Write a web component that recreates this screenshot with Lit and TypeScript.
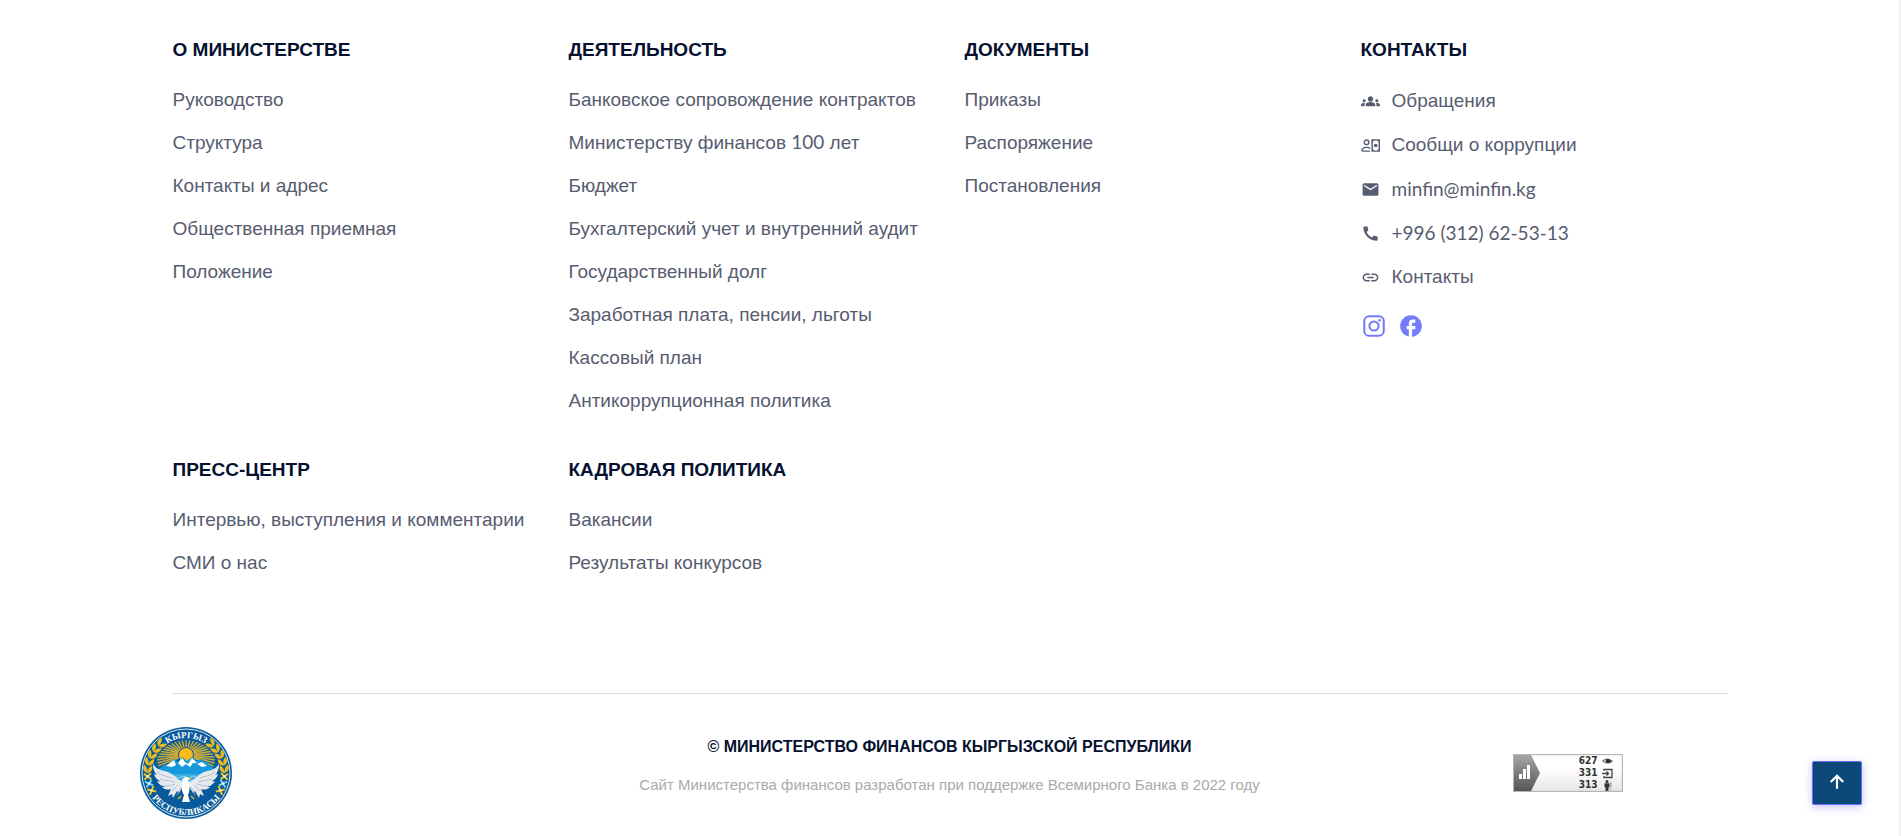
import { LitElement, html, css, svg } from "lit";
import { customElement } from "lit/decorators.js";

interface Section {
  title: string;
  links: string[];
}

const TOP_SECTIONS: Section[] = [
  {
    title: "О МИНИСТЕРСТВЕ",
    links: ["Руководство", "Структура", "Контакты и адрес", "Общественная приемная", "Положение"],
  },
  {
    title: "ДЕЯТЕЛЬНОСТЬ",
    links: [
      "Банковское сопровождение контрактов",
      "Министерству финансов 100 лет",
      "Бюджет",
      "Бухгалтерский учет и внутренний аудит",
      "Государственный долг",
      "Заработная плата, пенсии, льготы",
      "Кассовый план",
      "Антикоррупционная политика",
    ],
  },
  { title: "ДОКУМЕНТЫ", links: ["Приказы", "Распоряжение", "Постановления"] },
];

const BOTTOM_SECTIONS: Section[] = [
  { title: "ПРЕСС-ЦЕНТР", links: ["Интервью, выступления и комментарии", "СМИ о нас"] },
  { title: "КАДРОВАЯ ПОЛИТИКА", links: ["Вакансии", "Результаты конкурсов"] },
];

const groupsIcon = svg`<path d="M12 12.75c1.63 0 3.07.39 4.24.9 1.08.48 1.76 1.56 1.76 2.73V18H6v-1.61c0-1.18.68-2.26 1.76-2.73 1.17-.52 2.61-.91 4.24-.91zM4 13c1.1 0 2-.9 2-2s-.9-2-2-2-2 .9-2 2 .9 2 2 2zm1.13 1.1c-.37-.06-.74-.1-1.13-.1-.99 0-1.93.21-2.78.58C.48 14.9 0 15.62 0 16.43V18h4.5v-1.61c0-.83.23-1.61.63-2.29zM20 13c1.1 0 2-.9 2-2s-.9-2-2-2-2 .9-2 2 .9 2 2 2zm4 3.43c0-.81-.48-1.53-1.22-1.85-.85-.37-1.79-.58-2.78-.58-.39 0-.76.04-1.13.1.4.68.63 1.46.63 2.29V18H24v-1.57zM12 5.500c1.900 0 3.400 1.500 3.400 3.400s-1.500 3.400-3.400 3.400-3.400-1.500-3.400-3.400S10.100 5.500 12 5.500z"/>`;

const bribeIcon = svg`
  <g fill="none" stroke="currentColor" stroke-width="1.7">
    <circle cx="7" cy="8" r="3"/>
    <path d="M1.2 19.2h10.300M1.200 18.900c0-3 2.500-4.500 5.800-4.500 2 0 3.500.4 4.500 1.300"/>
  </g>
  <path fill-rule="evenodd" d="M13.200 4H24v16H13.200zM15 7.500v9l1.500 1.800h4.200l1.500-1.800v-9l-1.500-1.800h-4.200z"/>
  <circle cx="18.600" cy="12" r="2.300"/>`;

const mailIcon = svg`<path d="M20 4H4c-1.100 0-1.990.9-1.990 2L2 18c0 1.100.9 2 2 2h16c1.100 0 2-.9 2-2V6c0-1.100-.9-2-2-2zm0 4-8 5-8-5V6l8 5 8-5v2z"/>`;

const phoneIcon = svg`<path d="M20.010 15.380c-1.230 0-2.420-.2-3.530-.56-.35-.12-.74-.03-1.010.24l-1.570 1.970c-2.830-1.350-5.480-3.900-6.890-6.830l1.950-1.660c.27-.28.35-.67.24-1.020-.37-1.110-.56-2.300-.56-3.530 0-.54-.45-.99-.99-.99H4.190C3.650 3 3 3.240 3 3.990 3 13.280 10.730 21 20.010 21c.71 0 .99-.63.99-1.180v-3.450c0-.54-.45-.99-.99-.99z"/>`;

const linkIcon = svg`<path d="M3.900 12c0-1.710 1.390-3.100 3.100-3.100h4V7H7c-2.760 0-5 2.240-5 5s2.240 5 5 5h4v-1.900H7c-1.710 0-3.100-1.390-3.100-3.100zM8 13h8v-2H8v2zm9-6h-4v1.900h4c1.710 0 3.100 1.390 3.100 3.100s-1.390 3.100-3.100 3.100h-4V17h4c2.760 0 5-2.240 5-5s-2.240-5-5-5z"/>`;

const CONTACTS = [
  { icon: groupsIcon, text: "Обращения", latin: false },
  { icon: bribeIcon, text: "Сообщи о коррупции", latin: false },
  { icon: mailIcon, text: "minfin@minfin.kg", latin: true },
  { icon: phoneIcon, text: "+996 (312) 62-53-13", latin: true },
  { icon: linkIcon, text: "Контакты", latin: false },
];

@customElement("state-emblem")
export class StateEmblem extends LitElement {
  static styles = css`
    :host { display: block; }
    svg { display: block; width: 94px; height: 94px; }
    .legend { font: bold 9px "Liberation Serif", serif; fill: #fff; text-anchor: middle; }
  `;

  private wreath(side: number) {
    const items = [];
    for (let i = 0; i < 8; i++) {
      const turn = -50 + i * 11;
      const a = (turn * Math.PI) / 180;
      const x = 47 + side * Math.cos(a) * 38.5;
      const y = 47 + Math.sin(a) * 38.5;
      const lower = i > 4;
      items.push(svg`<g transform=${`translate(${x.toFixed(1)} ${y.toFixed(1)}) rotate(${side * turn})`}>
        ${lower
          ? svg`<path d="M-3.500-3 3.500 3M3.500-3-3.500 3" stroke=${i % 2 ? "#f2c21c" : "#79d0f2"} stroke-width="2"/><circle r="1.300" fill="#d9effa"/>`
          : svg`<path d="M0 4C-5 3-5-1-4-4-1-2 0 0 0 4 0 0 1-2 4-4 5-1 5 3 0 4z" fill="#e8b91f"/>`}
      </g>`);
    }
    return items;
  }

  render() {
    const rays = [];
    for (let i = 0; i <= 26; i++) {
      const a = Math.PI + (i - 2) * (Math.PI / 22);
      rays.push(svg`<line x1="47" y1="29" x2=${(47 + Math.cos(a) * 29).toFixed(1)} y2=${(34 + Math.sin(a) * 21).toFixed(1)}/>`);
    }
    const wing = svg`
      <path d="M46 57C39 55 36 49 29 46 22 44 18 44 14 38c0 6 2 9 4 11-1 0-2-1-3-1 1 4 4 6 6 7-1 1-2 0-3 0 2 4 5 5 8 5-1 1-2 1-3 1 3 3 6 3 9 2l-3 7 4-2 1 4 4-7 2 2z" fill="#e6e9ed"/>
      <path d="M18 46c5 4 10 4 15 6M21 53c5 2 9 1 14 3M26 60c4 0 7-1 10-2M33 65l6-6M38 69l4-8" stroke="#aab6c4" stroke-width=".8" fill="none"/>`;
    return html`<svg viewBox="0 0 94 94" role="img" aria-label="Герб">
      <defs>
        <path id="upper" d="M12 47a35 35 0 0 1 70 0"/>
        <path id="lower" d="M5 47a42 42 0 0 0 84 0"/>
        <clipPath id="inner"><circle cx="47" cy="47" r="33"/></clipPath>
      </defs>
      <circle cx="47" cy="47" r="46" fill="#0b5f9e"/>
      <circle cx="47" cy="47" r="44" fill="#075a9b" stroke="#d8e8f2" stroke-width="1"/>
      <g clip-path="url(#inner)">
        <g stroke="#c9a93a" stroke-width="1.500">${rays}</g>
        <circle cx="47" cy="29" r="7.500" fill="#f9b916" stroke="#075a9b" stroke-width="1"/>
        <path d="M17 45l8-6 4-1 6-5 4 3 4-5 5 4 5-4 5 4 5-2 8 6 7 6v6H17z" fill="#1699dc"/>
        <path d="M27 40l8-6 2 5-4 2zM39 37l4-5 3 4 3 2 4-6 5 5-4 0-3 4-4-3-4 3zM58 38l5-2 5 4-5 1z" fill="#fff"/>
        <path d="M22 48h50v12H22z" fill="#3aaee3"/>
        <path d="M22 51q2.500-2 5 0t5 0 5 0 5 0 5 0 5 0 5 0 5 0 5 0 5 0M22 55q2.500-2 5 0t5 0 5 0 5 0 5 0 5 0 5 0 5 0 5 0 5 0M22 59q2.500-2 5 0t5 0 5 0 5 0 5 0 5 0 5 0 5 0 5 0 5 0" fill="none" stroke="#a5def5" stroke-width=".9"/>
      </g>
      ${this.wreath(1)}${this.wreath(-1)}
      ${wing}
      <g transform="matrix(-1 0 0 1 94 0)">${wing}</g>
      <path d="M43 57c0-4 1-6 5-6l4 2-3 1c2 6 2 10 0 15l2 7h-8l2-7c-3-4-2-8-2-12z" fill="#fff"/>
      <path d="M50 51l3 2-3 0z" fill="#f2b51b"/>
      <path d="M42 70l-3 3M52 70l3 3" stroke="#f2b51b" stroke-width="1.300"/>
      <text class="legend"><textPath href="#upper" startOffset="50%">КЫРГЫЗ</textPath></text>
      <text class="legend"><textPath href="#lower" startOffset="50%">РЕСПУБЛИКАСЫ</textPath></text>
    </svg>`;
  }
}

@customElement("visit-counter")
export class VisitCounter extends LitElement {
  static styles = css`
    :host { display: block; }
    .box {
      display: flex;
      justify-content: space-between;
      box-sizing: border-box;
      width: 110px;
      height: 38px;
      border: 1px solid #b5b5b5;
      background: linear-gradient(#fff 40%, #e6e6e6);
      box-shadow: inset 0 0 2px #ccc;
    }
    .mark { display: block; width: 27px; height: 36px; }
    .rows { display: grid; grid-template-rows: repeat(3, 12px); padding-right: 9px; }
    .row {
      display: flex;
      align-items: center;
      gap: 4px;
      font: bold 10px/12px "DejaVu Sans Condensed", "DejaVu Sans", sans-serif;
      color: #333;
    }
    .glyph { width: 11px; height: 11px; }
  `;

  render() {
    return html`<div class="box">
      <svg class="mark" viewBox="0 0 27 36" aria-hidden="true">
        <defs>
          <linearGradient id="fade" x1="0" y1="0" x2="0" y2="1">
            <stop offset="0" stop-color="#a6a6a6"/><stop offset="1" stop-color="#555"/>
          </linearGradient>
        </defs>
        <path d="M0 0h17l9 18-9 18H0z" fill="url(#fade)"/>
        <path d="M5 19h3v5H5zM9 14h3v10H9zM13 10h3v14h-3z" fill="#fff"/>
      </svg>
      <div class="rows">
        <div class="row">627
          <svg class="glyph" viewBox="0 0 11 11"><path d="M0 5Q5 0 11 5 6 10 0 5z" fill="#555"/><circle cx="6" cy="5" r="1.800" fill="#222"/><path d="M1.500 5Q3 3.500 4 3.500 3 5 4.500 7z" fill="#ddd"/></svg>
        </div>
        <div class="row">331
          <svg class="glyph" viewBox="0 0 11 11"><path d="M2 3V1.500h8v8H2V8M0 5.500h6M4.500 3.500l2 2-2 2" fill="none" stroke="#444" stroke-width="1.300"/></svg>
        </div>
        <div class="row">313
          <svg class="glyph" viewBox="0 0 11 11"><path d="M8 2h2v5H9v3H8z" fill="#bbb"/><circle cx="5" cy="1.500" r="1.500" fill="#333"/><path d="M2.500 3.200h5v4H6.500V11h-3V7.200h-1z" fill="#333"/></svg>
        </div>
      </div>
    </div>`;
  }
}

@customElement("app-root")
export class AppRoot extends LitElement {
  static styles = css`
    :host {
      display: block;
      box-sizing: border-box;
      min-height: 100vh;
      border-right: 2px solid #f1f1f1;
      background: #fff;
      font-family: "Liberation Sans", Arial, sans-serif;
      color: #575c71;
    }
    .wrap { max-width: 1584px; margin: 0 auto; }
    .grid {
      display: grid;
      grid-template-columns: repeat(4, 1fr);
      padding-top: 36px;
    }
    .section { padding: 0 15px; margin-bottom: 34px; }
    .title { margin: 0; font-size: 19px; line-height: 28px; font-weight: 700; color: #06112f; }
    .list { list-style: none; margin: 14px 0 0; padding: 0; }
    .list.contacts { margin-top: 15px; }
    .item { display: flex; align-items: center; height: 43px; }
    .item.contact { height: 44px; }
    a { color: inherit; text-decoration: none; font-size: 19px; line-height: 24px; }
    .contact a { display: flex; align-items: center; gap: 12px; }
    .icon { width: 19px; height: 19px; fill: currentColor; }
    .latin { font-family: Lato, sans-serif; }
    .social { display: flex; gap: 11px; margin-top: 14px; color: #747bfa; }
    .social a { display: block; line-height: 0; }
    .social svg { width: 26px; height: 26px; }
    .line { height: 1px; margin: 75px 14px 0; border: 0; background: #dcdcdc; }
    .base {
      display: grid;
      grid-template-columns: 1fr auto 1fr;
      align-items: center;
      max-width: 1622px;
      margin: 0 auto;
      padding: 32px 0 16px;
    }
    .copy { text-align: center; margin-bottom: 14px; }
    .owner { margin: 0; font-size: 16px; line-height: 24px; font-weight: 700; color: #06112f; }
    .credit { margin: 14px 0 0; font-size: 15px; line-height: 24px; color: #aaa; }
    .counter { justify-self: end; padding-right: 138px; }
    .to-top {
      position: fixed;
      right: 39px;
      bottom: 31px;
      display: grid;
      place-items: center;
      width: 50px;
      height: 44px;
      padding: 0 0 2px;
      border: 1px solid #696cff;
      border-radius: 2px;
      background: #0b4778;
      box-shadow: 0 2px 8px rgba(105, 108, 255, 0.4);
      color: #fff;
      cursor: pointer;
    }
    .to-top svg { width: 20px; height: 20px; }
  `;

  private label(text: string) {
    return text.split(/(\d+)/).map((part) =>
      /^\d+$/.test(part) ? html`<span class="latin">${part}</span>` : part
    );
  }

  private section(s: Section) {
    return html`<section class="section">
      <h2 class="title">${s.title}</h2>
      <ul class="list">
        ${s.links.map((l) => html`<li class="item"><a href="#">${this.label(l)}</a></li>`)}
      </ul>
    </section>`;
  }

  render() {
    return html`
      <footer>
        <div class="wrap">
          <div class="grid">
            ${TOP_SECTIONS.map((s) => this.section(s))}
            <section class="section">
              <h2 class="title">КОНТАКТЫ</h2>
              <ul class="list contacts">
                ${CONTACTS.map(
                  (c) => html`<li class="item contact">
                    <a href="#"><svg class="icon" viewBox="0 0 24 24" aria-hidden="true">${c.icon}</svg><span class=${c.latin ? "latin" : ""}>${c.text}</span></a>
                  </li>`
                )}
              </ul>
              <div class="social">
                <a href="#" aria-label="Instagram">
                  <svg viewBox="0 0 24 24" fill="none" stroke="currentColor" stroke-width="1.900"><rect x="3" y="3" width="18" height="18" rx="4.500"/><circle cx="12" cy="12" r="4.200"/><circle cx="17.200" cy="6.800" r="1.200" fill="currentColor" stroke="none"/></svg>
                </a>
                <a href="#" aria-label="Facebook">
                  <svg viewBox="0 0 24 24" fill="currentColor"><path d="M22 12c0-5.520-4.480-10-10-10S2 6.480 2 12c0 4.840 3.440 8.870 8 9.800V15H8v-3h2V9.500C10 7.570 11.570 6 13.500 6H16v3h-2c-.55 0-1 .45-1 1v2h3v3h-3v6.950c5.050-.5 9-4.760 9-9.950z"/></svg>
                </a>
              </div>
            </section>
            ${BOTTOM_SECTIONS.map((s) => this.section(s))}
          </div>
          <hr class="line" />
        </div>
        <div class="base">
          <state-emblem></state-emblem>
          <div class="copy">
            <p class="owner">© МИНИСТЕРСТВО ФИНАНСОВ КЫРГЫЗСКОЙ РЕСПУБЛИКИ</p>
            <p class="credit">Сайт Министерства финансов разработан при поддержке Всемирного Банка в 2022 году</p>
          </div>
          <visit-counter class="counter"></visit-counter>
        </div>
      </footer>
      <button class="to-top" type="button" aria-label="Наверх">
        <svg viewBox="0 0 24 24" fill="none" stroke="currentColor" stroke-width="2.600"><path d="M12 20V5M4.500 12 12 4.500l7.500 7.500"/></svg>
      </button>
    `;
  }
}
